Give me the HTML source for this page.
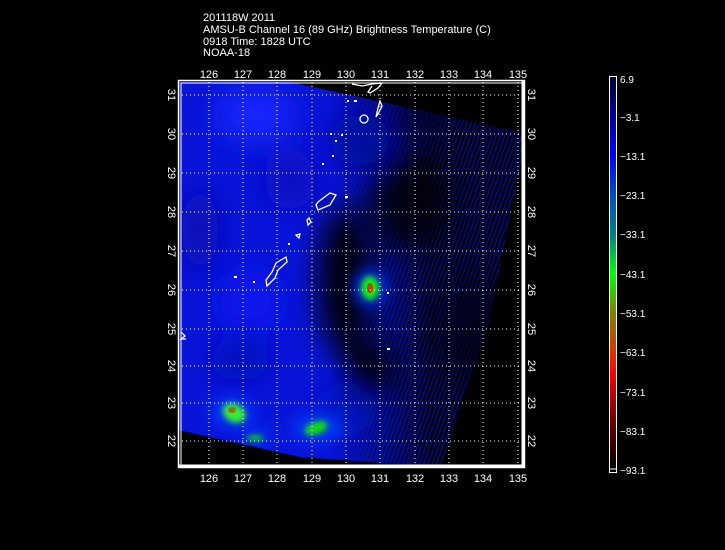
<!DOCTYPE html>
<html><head><style>
html,body{margin:0;padding:0;background:#000;width:725px;height:550px;overflow:hidden}
svg{display:block}
text{font-family:"Liberation Sans",sans-serif;fill:#fff}
</style></head><body>
<svg width="725" height="550" viewBox="0 0 725 550" xmlns="http://www.w3.org/2000/svg">
<defs>
<clipPath id="sw"><polygon points="178,82 290,82 523,133 523,150 487,330 440,467 300,457 178,430"/></clipPath>
<filter id="b8" x="-50%" y="-50%" width="200%" height="200%"><feGaussianBlur stdDeviation="8"/></filter>
<filter id="b4" x="-50%" y="-50%" width="200%" height="200%"><feGaussianBlur stdDeviation="3"/></filter>
<filter id="b15" x="-50%" y="-50%" width="200%" height="200%"><feGaussianBlur stdDeviation="14"/></filter>
<linearGradient id="cb" x1="0" y1="0" x2="0" y2="1">
<stop offset="0" stop-color="#000030"/>
<stop offset="0.1" stop-color="#0000a0"/>
<stop offset="0.2" stop-color="#0000ff"/>
<stop offset="0.3" stop-color="#0050c0"/>
<stop offset="0.4" stop-color="#008080"/>
<stop offset="0.5" stop-color="#00ff00"/>
<stop offset="0.6" stop-color="#808000"/>
<stop offset="0.7" stop-color="#e03000"/>
<stop offset="0.75" stop-color="#ff0000"/>
<stop offset="0.8" stop-color="#c00000"/>
<stop offset="0.9" stop-color="#500000"/>
<stop offset="1" stop-color="#000000"/>
</linearGradient>
<linearGradient id="fade" x1="330" y1="0" x2="430" y2="0" gradientUnits="userSpaceOnUse">
<stop offset="0" stop-color="#fff" stop-opacity="0"/>
<stop offset="1" stop-color="#fff" stop-opacity="1"/>
</linearGradient>
<mask id="fm"><rect x="178" y="82" width="346" height="386" fill="url(#fade)"/></mask>
<pattern id="hatch" width="4" height="4" patternUnits="userSpaceOnUse" patternTransform="rotate(20)">
<rect width="4" height="4" fill="#000008"/><rect width="1.5" height="4" fill="#000c80"/>
</pattern>
</defs>

<text x="203" y="21" font-size="11">201118W 2011</text>
<text x="203" y="33" font-size="11">AMSU-B Channel 16 (89 GHz) Brightness Temperature (C)</text>
<text x="203" y="45" font-size="11">0918 Time: 1828 UTC</text>
<text x="203" y="56" font-size="11">NOAA-18</text>

<g clip-path="url(#sw)">
<rect x="178" y="82" width="346" height="386" fill="#0814d8"/>
<g filter="url(#b15)">
<ellipse cx="255" cy="115" rx="40" ry="25" fill="#1428ff"/>
<ellipse cx="200" cy="230" rx="18" ry="40" fill="#0a10b0"/>
<ellipse cx="290" cy="180" rx="25" ry="30" fill="#0a10c0"/>
<ellipse cx="250" cy="300" rx="30" ry="30" fill="#0a18f0"/>
<ellipse cx="240" cy="360" rx="30" ry="20" fill="#0610b8"/>
</g>
<rect x="178" y="82" width="346" height="386" fill="url(#hatch)" mask="url(#fm)"/>
<g filter="url(#b15)">
<ellipse cx="345" cy="280" rx="28" ry="75" fill="#000008"/>
<ellipse cx="410" cy="200" rx="40" ry="50" fill="#000008" opacity="0.8"/>
<ellipse cx="470" cy="330" rx="35" ry="50" fill="#000010" opacity="0.7"/>
<ellipse cx="370" cy="370" rx="25" ry="30" fill="#000010"/>
<ellipse cx="360" cy="140" rx="30" ry="25" fill="#0010a0"/>
<ellipse cx="420" cy="120" rx="30" ry="15" fill="#000030"/>
<ellipse cx="345" cy="410" rx="25" ry="20" fill="#0018c0"/>
</g>
<g filter="url(#b8)">
<ellipse cx="370" cy="288" rx="16" ry="18" fill="#0030ff"/>
<ellipse cx="232" cy="412" rx="20" ry="14" fill="#0040ff"/>
<ellipse cx="318" cy="428" rx="26" ry="12" fill="#0040ff"/>
<ellipse cx="258" cy="436" rx="18" ry="6" fill="#0030ff"/>
</g>
<g filter="url(#b4)">
<ellipse cx="370" cy="288" rx="9" ry="12" fill="#10f010"/>
<ellipse cx="234" cy="413" rx="12" ry="9" fill="#30f030" transform="rotate(30 234 413)"/>
<ellipse cx="255" cy="438" rx="9" ry="3" fill="#10d010"/>
<ellipse cx="316" cy="428" rx="12" ry="6" fill="#10e010" transform="rotate(-20 316 428)"/>
</g>
<ellipse cx="370" cy="288" rx="3" ry="5" fill="#c04000"/>
<ellipse cx="232" cy="410" rx="4" ry="3" fill="#b05010" opacity="0.8"/>
</g>

<g fill="none" stroke="#fff" stroke-width="1.3">
<path d="M352,84 L362,86 L372,84 L382,83 L378,88 L370,93 L368,92 L372,86"/>
<path d="M380,101 L382,106 L378,114 L376,117 L378,108 Z"/>
<circle cx="364" cy="119" r="4"/>
<path d="M318,202 L330,193 L336,195 L330,205 L318,210 L316,205 Z"/>
<path d="M309,218 L311,222 L308,225 L307,220 Z"/>
<path d="M296,235 L300,234 L299,238 Z"/>
<path d="M276,263 L286,257 L287,262 L278,270 L275,278 L267,286 L266,280 L272,272 Z"/>
<path d="M181,332 L185,336 L181,339 L186,339"/>
</g>
<g fill="#fff">
<rect x="330" y="133" width="2" height="2"/><rect x="335" y="140" width="2" height="2"/><rect x="332" y="155" width="2" height="2"/><rect x="322" y="163" width="2" height="2"/><rect x="345" y="196" width="3" height="2"/><rect x="234" y="276" width="3" height="2"/><rect x="253" y="281" width="2" height="2"/><rect x="288" y="243" width="2" height="2"/><rect x="387" y="292" width="2" height="2"/><rect x="387" y="348" width="3" height="2"/><rect x="347" y="100" width="2" height="2"/><rect x="354" y="100" width="3" height="2"/><rect x="341" y="134" width="2" height="2"/>
</g>

<g stroke="#fff" stroke-width="1" stroke-dasharray="1,3">
<line x1="209" y1="82" x2="209" y2="466"/><line x1="243" y1="82" x2="243" y2="466"/><line x1="277" y1="82" x2="277" y2="466"/><line x1="312" y1="82" x2="312" y2="466"/><line x1="346" y1="82" x2="346" y2="466"/><line x1="380" y1="82" x2="380" y2="466"/><line x1="415" y1="82" x2="415" y2="466"/><line x1="449" y1="82" x2="449" y2="466"/><line x1="483" y1="82" x2="483" y2="466"/><line x1="518" y1="82" x2="518" y2="466"/>
<line x1="178" y1="95" x2="524" y2="95"/><line x1="178" y1="134" x2="524" y2="134"/><line x1="178" y1="173" x2="524" y2="173"/><line x1="178" y1="212" x2="524" y2="212"/><line x1="178" y1="251" x2="524" y2="251"/><line x1="178" y1="290" x2="524" y2="290"/><line x1="178" y1="329" x2="524" y2="329"/><line x1="178" y1="366" x2="524" y2="366"/><line x1="178" y1="403" x2="524" y2="403"/><line x1="178" y1="441" x2="524" y2="441"/>
</g>
<rect x="178.5" y="80.5" width="346" height="387" fill="none" stroke="#fff" stroke-width="1.5"/>
<rect x="181" y="83" width="341" height="382" fill="none" stroke="#fff" stroke-width="1"/>
<line x1="178" y1="466" x2="525" y2="466" stroke="#fff" stroke-width="3"/>
<line x1="523" y1="80" x2="523" y2="468" stroke="#fff" stroke-width="3"/>

<g font-size="11" text-anchor="middle">
<text x="209" y="78">126</text><text x="243" y="78">127</text><text x="277" y="78">128</text><text x="312" y="78">129</text><text x="346" y="78">130</text><text x="380" y="78">131</text><text x="415" y="78">132</text><text x="449" y="78">133</text><text x="483" y="78">134</text><text x="518" y="78">135</text>
<text x="209" y="482">126</text><text x="243" y="482">127</text><text x="277" y="482">128</text><text x="312" y="482">129</text><text x="346" y="482">130</text><text x="380" y="482">131</text><text x="415" y="482">132</text><text x="449" y="482">133</text><text x="483" y="482">134</text><text x="518" y="482">135</text>
</g>
<g font-size="11" text-anchor="middle">
<text transform="translate(168,95) rotate(90)">31</text><text transform="translate(168,134) rotate(90)">30</text><text transform="translate(168,173) rotate(90)">29</text><text transform="translate(168,212) rotate(90)">28</text><text transform="translate(168,251) rotate(90)">27</text><text transform="translate(168,290) rotate(90)">26</text><text transform="translate(168,329) rotate(90)">25</text><text transform="translate(168,366) rotate(90)">24</text><text transform="translate(168,403) rotate(90)">23</text><text transform="translate(168,441) rotate(90)">22</text>
<text transform="translate(528,95) rotate(90)">31</text><text transform="translate(528,134) rotate(90)">30</text><text transform="translate(528,173) rotate(90)">29</text><text transform="translate(528,212) rotate(90)">28</text><text transform="translate(528,251) rotate(90)">27</text><text transform="translate(528,290) rotate(90)">26</text><text transform="translate(528,329) rotate(90)">25</text><text transform="translate(528,366) rotate(90)">24</text><text transform="translate(528,403) rotate(90)">23</text><text transform="translate(528,441) rotate(90)">22</text>
</g>

<rect x="610" y="77" width="6" height="394" fill="url(#cb)"/>
<rect x="609.5" y="76.5" width="7" height="396" fill="none" stroke="#fff" stroke-width="1"/>
<line x1="610" y1="469" x2="616" y2="469" stroke="#fff"/>
<g font-size="10">
<text x="620" y="83">6.9</text><text x="620" y="121">−3.1</text><text x="620" y="160">−13.1</text><text x="620" y="199">−23.1</text><text x="620" y="238">−33.1</text><text x="620" y="278">−43.1</text><text x="620" y="317">−53.1</text><text x="620" y="356">−63.1</text><text x="620" y="396">−73.1</text><text x="620" y="435">−83.1</text><text x="620" y="474">−93.1</text>
</g>
</svg>
</body></html>
